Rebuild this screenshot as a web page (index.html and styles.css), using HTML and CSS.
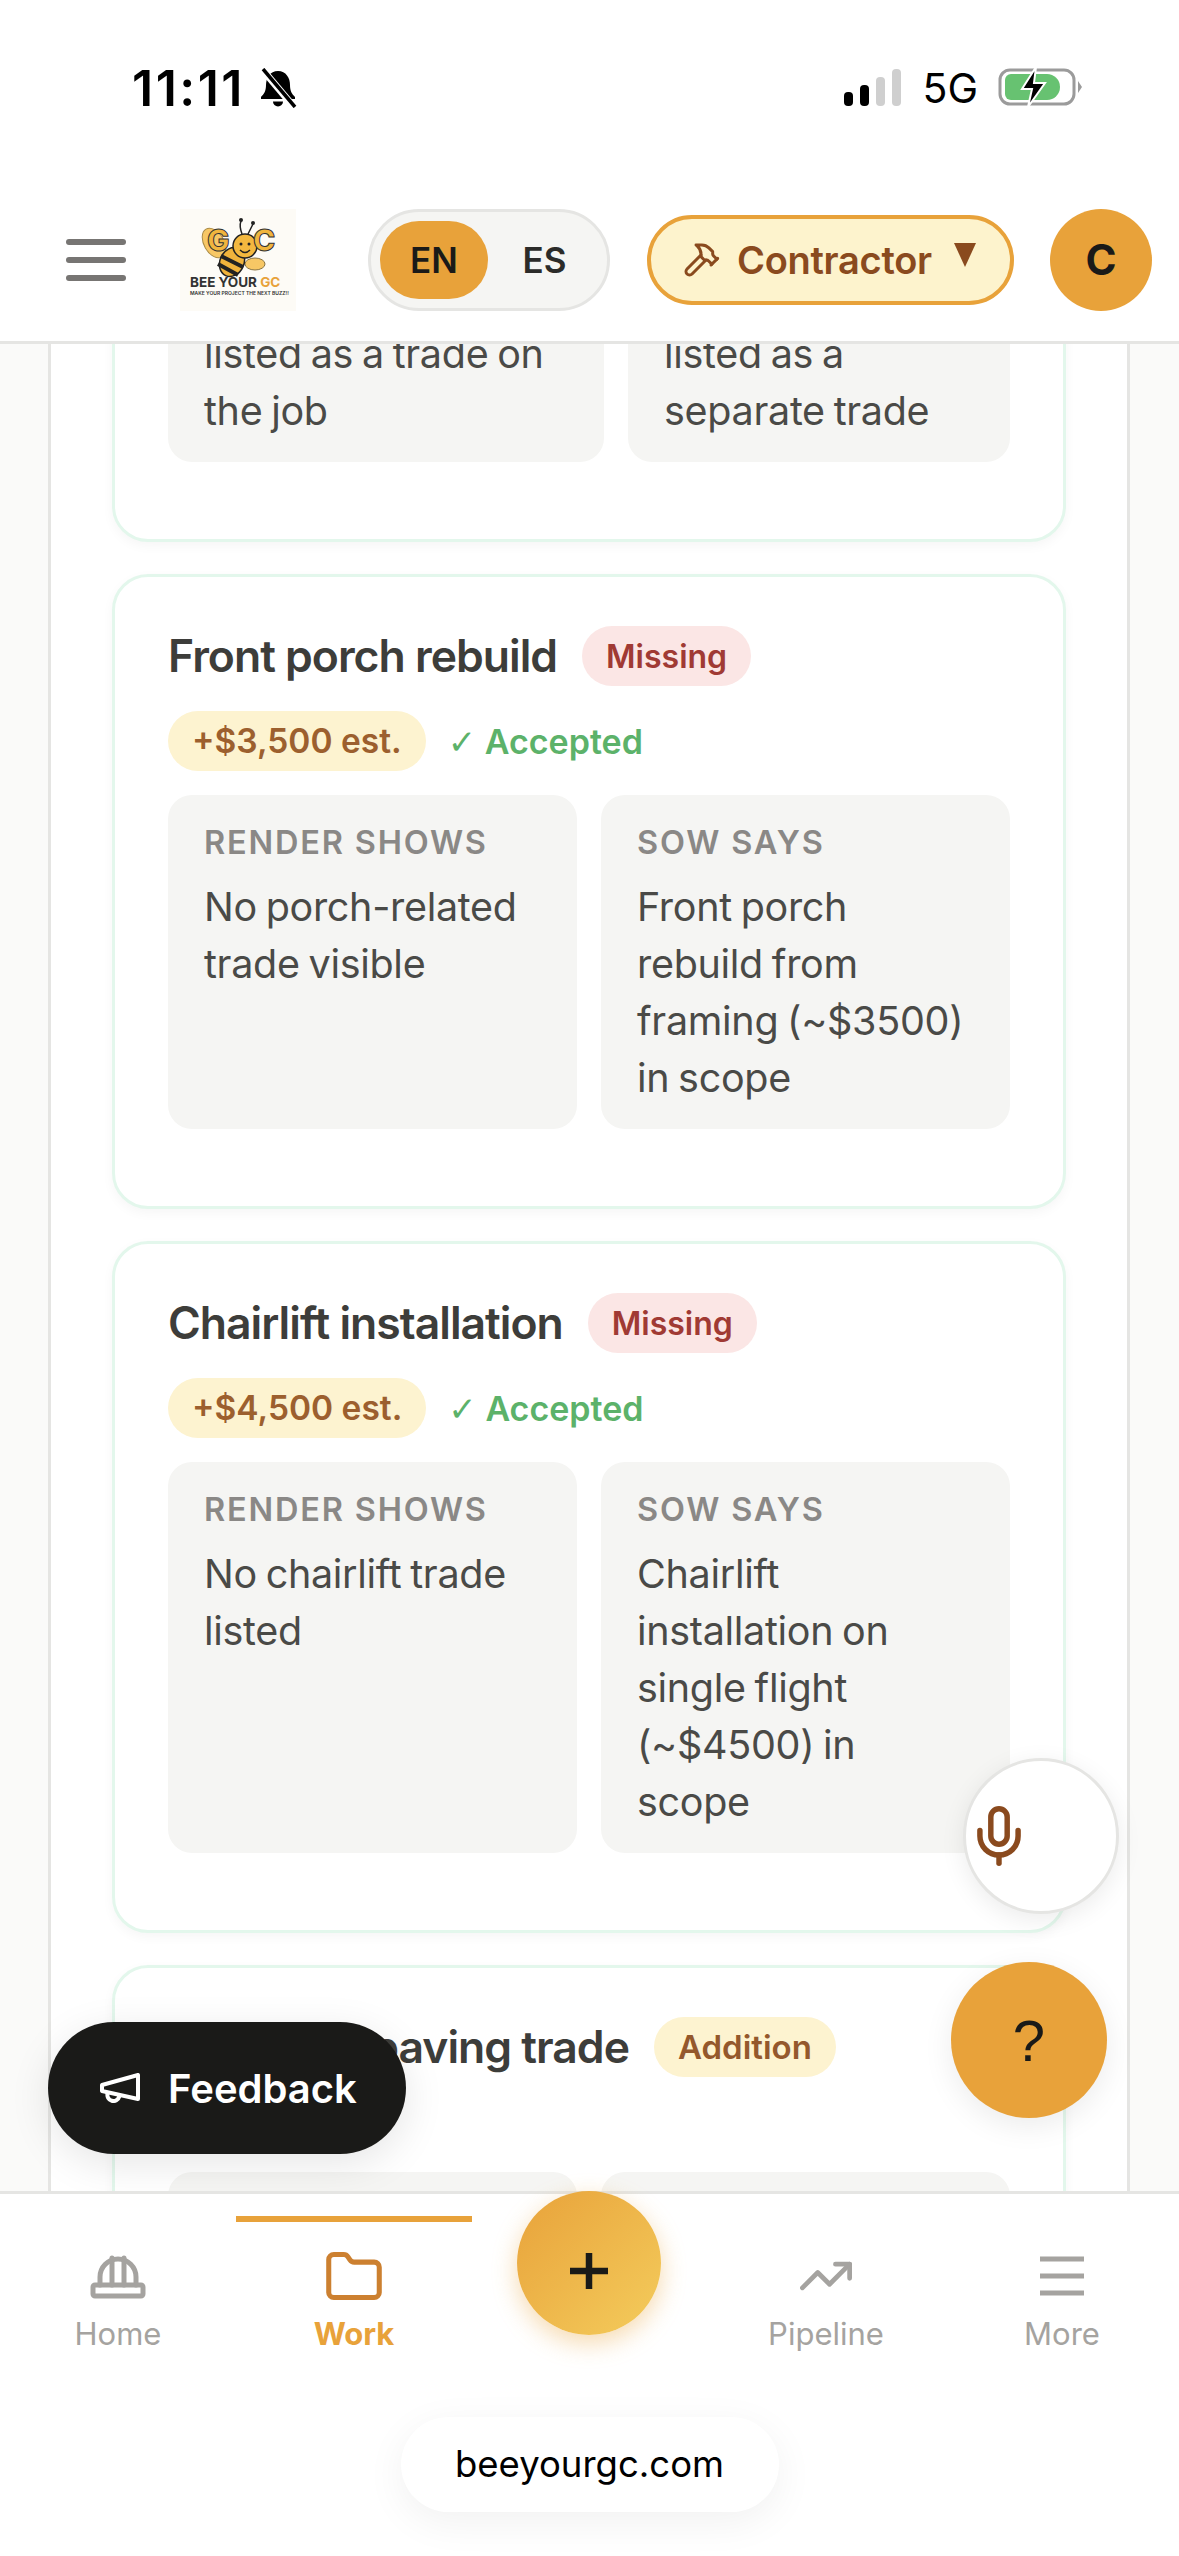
FILE: index.html
```html
<!DOCTYPE html>
<html lang="en">
<head>
  <meta charset="UTF-8" />
  <meta name="viewport" content="width=device-width, initial-scale=1.0"/>
  <title>Bee Your GC</title>
  <link rel="stylesheet" href="styles.css">
</head>
<body>
<div class="page">

  <div class="status">
    <span class="clock">11:11</span>
    <svg class="bell" viewBox="0 0 40 40" width="40" height="40">
      <path d="M20 3c-8 0-12 7-12 14 0 6-2 9-5 12v2h34v-2c-3-3-5-6-5-12 0-7-4-14-12-14z" fill="#000"/>
      <path d="M15 33.500a5 5 0 0 0 10 0z" fill="#000"/>
      <path d="M4 1l32 38" stroke="#fff" stroke-width="7"/>
      <path d="M5 1l32 38" stroke="#000" stroke-width="3.500"/>
    </svg>
    <div class="status-right">
      <div class="signal"><i class="s1"></i><i class="s2"></i><i class="s3"></i><i class="s4"></i></div>
      <span class="net">5G</span>
      <svg class="battery" viewBox="0 0 84 42" width="84" height="42">
        <rect x="2" y="4" width="74" height="34" rx="10" fill="none" stroke="#9b9b9b" stroke-width="3"/>
        <path d="M80 15l4 6-4 6z" fill="#9b9b9b"/>
        <path d="M13 8h36a13 13 0 0 1 0 26H13a6 6 0 0 1-6-6V14a6 6 0 0 1 6-6z" fill="#67c271"/>
        <path d="M38 1L24 23h10l-4 18 17-24H36z" fill="#000" stroke="#fff" stroke-width="2"/>
      </svg>
    </div>
  </div>

  <header class="topbar">
    <div class="burger"><i></i><i></i><i></i></div>
    <svg class="logo" viewBox="0 0 116 102" width="116" height="102">
      <rect width="116" height="102" fill="#fdfbf6"/>
      <ellipse cx="34" cy="34" rx="10" ry="16" fill="#f7c765" stroke="#a98a45" transform="rotate(-30 34 34)"/>
      <ellipse cx="75" cy="55" rx="10" ry="6" fill="#f7c765" stroke="#8a7440"/>
      <ellipse cx="52" cy="53" rx="12" ry="15" fill="#f0b33c" stroke="#222" stroke-width="1.500" transform="rotate(25 52 53)"/>
      <path d="M41 47l22 11M38 55l20 11" stroke="#222" stroke-width="4"/>
      <circle cx="65" cy="37" r="12" fill="#f3b83f" stroke="#222" stroke-width="1.500"/>
      <circle cx="61" cy="35" r="1.500" fill="#222"/>
      <circle cx="69" cy="35" r="1.500" fill="#222"/>
      <path d="M60 41q5 5 10 0" stroke="#222" fill="none" stroke-width="1.500"/>
      <path d="M62 25q-3-8-1-13M68 25q3-6 5-10" stroke="#222" fill="none" stroke-width="1.500"/>
      <circle cx="61" cy="11" r="2" fill="#222"/>
      <circle cx="73" cy="14" r="2" fill="#222"/>
      <text class="logo-letter" x="27" y="42">G</text>
      <text class="logo-letter" x="73" y="42">C</text>
      <text class="logo-name" x="10" y="78">BEE YOUR <tspan fill="#e8a23a">GC</tspan></text>
      <text class="logo-tag" x="10" y="86">MAKE YOUR PROJECT THE NEXT BUZZ!!</text>
    </svg>
    <div class="lang">
      <span class="lang-on">EN</span>
      <span class="lang-off">ES</span>
    </div>
    <div class="role">
      <svg viewBox="0 0 24 24" width="40" height="40" fill="none" stroke="currentColor" stroke-width="1.800" stroke-linecap="round" stroke-linejoin="round">
        <path d="m15 12-8.373 8.373a1 1 0 1 1-3-3L12 9"/>
        <path d="m18 15 4-4"/>
        <path d="m21.500 11.500-1.914-1.914A2 2 0 0 1 19 8.172V7l-2.260-2.260a6 6 0 0 0-4.202-1.756L9 2.960l.92.820A6.180 6.180 0 0 1 12 8.400V10l2 2h1.172a2 2 0 0 1 1.414.586L18.500 14.500"/>
      </svg>
      <span class="role-name">Contractor</span>
      <span class="role-caret"></span>
    </div>
    <div class="avatar">C</div>
  </header>

  <main class="content">
    <div class="panel">

      <section class="card card-cut">
        <div class="compare compare-wide">
          <div class="box"><p class="box-text">listed as a trade on the job</p></div>
          <div class="box"><p class="box-text">listed as a separate trade</p></div>
        </div>
      </section>

      <section class="card">
        <div class="card-head">
          <h3>Front porch rebuild</h3>
          <span class="pill pill-missing">Missing</span>
        </div>
        <div class="card-meta">
          <span class="pill pill-est">+$3,500 est.</span>
          <span class="accepted"><span class="tick">✓</span> Accepted</span>
        </div>
        <div class="compare">
          <div class="box">
            <div class="box-label">RENDER SHOWS</div>
            <p class="box-text">No porch-related trade visible</p>
          </div>
          <div class="box">
            <div class="box-label">SOW SAYS</div>
            <p class="box-text">Front porch rebuild from framing (~$3500) in scope</p>
          </div>
        </div>
      </section>

      <section class="card">
        <div class="card-head">
          <h3>Chairlift installation</h3>
          <span class="pill pill-missing">Missing</span>
        </div>
        <div class="card-meta">
          <span class="pill pill-est">+$4,500 est.</span>
          <span class="accepted"><span class="tick">✓</span> Accepted</span>
        </div>
        <div class="compare">
          <div class="box">
            <div class="box-label">RENDER SHOWS</div>
            <p class="box-text">No chairlift trade listed</p>
          </div>
          <div class="box">
            <div class="box-label">SOW SAYS</div>
            <p class="box-text">Chairlift installation on single flight (~$4500) in scope</p>
          </div>
        </div>
      </section>

      <section class="card">
        <div class="card-head">
          <h3>Driveway paving trade</h3>
          <span class="pill pill-add">Addition</span>
        </div>
        <div class="card-meta card-meta-short"></div>
        <div class="compare">
          <div class="box"></div>
          <div class="box"></div>
        </div>
      </section>

    </div>

    <button class="mic">
      <svg viewBox="4 1 16 22" width="44" height="60" fill="none" stroke="currentColor" stroke-width="2" stroke-linecap="round">
        <rect x="9" y="2" width="6" height="13" rx="3"/>
        <path d="M19 10v2a7 7 0 0 1-14 0v-2"/>
        <path d="M12 19v3"/>
      </svg>
    </button>
    <button class="help">?</button>
    <button class="feedback">
      <svg viewBox="2 5 20 15" width="40" height="30" fill="none" stroke="currentColor" stroke-width="2" stroke-linecap="round" stroke-linejoin="round">
        <path d="m3 11 18-5v12L3 14v-3z"/>
        <path d="M11.600 16.800a3 3 0 1 1-5.800-1.600"/>
      </svg>
      Feedback
    </button>
  </main>

  <footer class="bottom">
    <nav class="tabs">
      <a class="tab">
        <span class="tab-icon">
          <svg viewBox="0 0 56 46" width="56" height="46" fill="none" stroke="currentColor" stroke-width="5" stroke-linejoin="round" stroke-linecap="round">
            <rect x="3" y="32" width="50" height="11" rx="2"/>
            <path d="M10 32V24A18 18 0 0 1 46 24V32"/>
            <path d="M22 32V5M34 32V5"/>
          </svg>
        </span>
        Home
      </a>
      <a class="tab tab-active">
        <span class="tab-icon">
          <svg viewBox="1 2 22 19" width="56" height="48" fill="none" stroke="#cc8030" stroke-width="2" stroke-linejoin="round">
            <path d="M20 20a2 2 0 0 0 2-2V8a2 2 0 0 0-2-2h-7.900a2 2 0 0 1-1.690-.9L9.600 3.900A2 2 0 0 0 7.930 3H4a2 2 0 0 0-2 2v13a2 2 0 0 0 2 2Z"/>
          </svg>
        </span>
        Work
      </a>
      <div class="tab-add">
        <button class="add">
          <svg viewBox="0 0 38 36" width="38" height="36"><path d="M19 0v36M0 18h38" stroke="#1a1a18" stroke-width="6.500"/></svg>
        </button>
      </div>
      <a class="tab">
        <span class="tab-icon">
          <svg viewBox="1 6 22 12" width="52" height="32" fill="none" stroke="currentColor" stroke-width="2" stroke-linecap="round" stroke-linejoin="round">
            <polyline points="22 7 13.500 15.500 8.500 10.500 2 17"/>
            <polyline points="16 7 22 7 22 13"/>
          </svg>
        </span>
        Pipeline
      </a>
      <a class="tab">
        <span class="tab-icon">
          <svg viewBox="0 0 46 40" width="46" height="40" stroke="currentColor" stroke-width="5"><path d="M1 3h44M1 20h44M1 37h44"/></svg>
        </span>
        More
      </a>
    </nav>
    <div class="url">beeyourgc.com</div>
  </footer>

</div>
</body>
</html>
```

FILE: styles.css
```css
:root {
  --orange: #e8a23a;
  --brown: #8a4a1e;
  --cream: #fdf3cd;
  --line: #e5e5e3;
  --mint: #e3f7ec;
  --dark: #1a1a18;
  --title: #3d3d3a;
  --body: #4a4a47;
  --grey: #a5a3a0;
}

* {
  box-sizing: border-box;
}

body {
  margin: 0;
  font-family: Inter, 'Noto Sans', sans-serif;
  background: #fff;
}

button {
  font-family: inherit;
  border: none;
  padding: 0;
}

.page {
  position: relative;
  display: flex;
  flex-direction: column;
  width: 1179px;
  height: 2556px;
  overflow: hidden;
  background: #fff;
}

/* status bar */
.status {
  display: flex;
  align-items: flex-start;
  height: 178px;
  padding: 66px 0 0 132px;
  flex-shrink: 0;
}

.clock {
  font-size: 50px;
  font-weight: 600;
  line-height: 44px;
  letter-spacing: 2.500px;
  color: #000;
}

.bell {
  margin: 2px 0 0 13px;
}

.status-right {
  display: flex;
  align-items: flex-end;
  margin-left: auto;
  margin-right: 97px;
  height: 42px;
}

.signal {
  display: flex;
  align-items: flex-end;
  gap: 7px;
  margin-bottom: 2px;
}

.signal i {
  display: block;
  width: 9px;
  border-radius: 4px;
  background: #000;
}

.s1 { height: 14px; }
.s2 { height: 21px; }
.s3 { height: 29px; background: #cfcfcf !important; }
.s4 { height: 37px; background: #cfcfcf !important; }

.net {
  margin: 0 20px 0 21px;
  font-size: 41px;
  line-height: 40px;
  color: #000;
}

/* header */
.topbar {
  display: flex;
  align-items: center;
  height: 166px;
  padding-left: 66px;
  border-bottom: 3px solid var(--line);
  flex-shrink: 0;
}

.burger {
  display: flex;
  flex-direction: column;
  gap: 12px;
  width: 60px;
}

.burger i {
  display: block;
  height: 6px;
  border-radius: 3px;
  background: #777573;
}

.logo {
  margin-left: 54px;
}

.logo-letter {
  font-size: 30px;
  font-weight: 800;
  fill: #f0b53e;
  stroke: #333;
  stroke-width: 1;
}

.logo-name {
  font-size: 13.500px;
  font-weight: 700;
  fill: #333;
}

.logo-tag {
  font-size: 5px;
  font-weight: 600;
  fill: #333;
}

.lang {
  display: flex;
  align-items: center;
  width: 242px;
  height: 102px;
  margin-left: 72px;
  padding: 0 9px;
  border: 3px solid var(--line);
  border-radius: 51px;
  background: #f5f5f3;
  font-size: 35px;
  font-weight: 600;
  color: #2b2b29;
}

.lang-on {
  display: flex;
  align-items: center;
  justify-content: center;
  width: 108px;
  height: 78px;
  border-radius: 39px;
  background: var(--orange);
  color: var(--dark);
}

.lang-off {
  flex: 1;
  padding-left: 3px;
  text-align: center;
}

.role {
  display: flex;
  align-items: center;
  width: 367px;
  height: 90px;
  margin-left: 37px;
  padding-left: 30px;
  border: 4px solid var(--orange);
  border-radius: 45px;
  background: var(--cream);
  color: var(--brown);
}

.role-name {
  margin-left: 16px;
  font-size: 38px;
  font-weight: 600;
  letter-spacing: -0.300px;
}

.role-caret {
  width: 0;
  height: 0;
  margin: -10px 0 0 22px;
  border-left: 11px solid transparent;
  border-right: 11px solid transparent;
  border-top: 24px solid var(--brown);
}

.avatar {
  display: flex;
  align-items: center;
  justify-content: center;
  width: 102px;
  height: 102px;
  margin-left: 36px;
  border-radius: 50%;
  background: var(--orange);
  font-size: 42px;
  font-weight: 700;
  color: var(--dark);
}

/* scrolled content */
.content {
  flex: 1;
  overflow: hidden;
  padding: 0 49px 0 48px;
  background: #fafaf9;
}

.panel {
  display: flex;
  flex-direction: column;
  gap: 32px;
  margin-top: -110px;
  padding: 0 61px;
  background: #fff;
  border-left: 3px solid var(--line);
  border-right: 3px solid var(--line);
}

.card {
  padding: 49px 53px 77px;
  background: #fff;
  border: 3px solid var(--mint);
  border-radius: 36px;
  box-shadow: 0 4px 12px rgba(0, 0, 0, 0.04);
  flex-shrink: 0;
}

.card-head {
  display: flex;
  align-items: center;
  gap: 25px;
}

.card-head h3 {
  margin: 0;
  font-size: 44.500px;
  font-weight: 600;
  letter-spacing: -1px;
  color: var(--title);
  white-space: nowrap;
}

.card-meta {
  display: flex;
  align-items: center;
  gap: 22px;
  margin-top: 25px;
}

.card-meta-short {
  height: 46px;
}

.pill {
  display: flex;
  align-items: center;
  height: 60px;
  padding: 0 24px;
  border-radius: 30px;
  font-size: 33px;
  font-weight: 600;
  white-space: nowrap;
}

.pill-missing {
  background: #fbe6e5;
  color: #a03a34;
  font-size: 32px;
}

.pill-add {
  background: #fdf3d0;
  color: #94582c;
}

.pill-est {
  background: #fdf3d0;
  color: #9c5f2e;
  font-size: 33.500px;
}

.accepted {
  font-size: 34px;
  font-weight: 600;
  color: #5cb26a;
}

.tick {
  font-family: 'DejaVu Sans', sans-serif;
  font-weight: 400;
}

.compare {
  display: grid;
  grid-template-columns: 1fr 1fr;
  gap: 24px;
  margin-top: 24px;
}

.compare-wide {
  grid-template-columns: 436px 1fr;
  margin-top: 0;
}

.box {
  min-height: 110px;
  padding: 26px 36px 22px;
  background: #f5f5f3;
  border-radius: 24px;
}

.box-label {
  font-size: 32.500px;
  font-weight: 600;
  line-height: 44px;
  letter-spacing: 1.800px;
  color: #8a8886;
}

.box-text {
  margin: 14px 0 0;
  font-size: 39.500px;
  line-height: 57px;
  letter-spacing: -0.300px;
  word-spacing: -2px;
  color: var(--body);
}

/* floating buttons */
.mic {
  position: absolute;
  left: 963px;
  top: 1758px;
  display: flex;
  align-items: center;
  width: 156px;
  height: 156px;
  padding-left: 11px;
  background: #fff;
  border: 3px solid var(--line);
  border-radius: 50%;
  color: var(--brown);
  box-shadow: 0 6px 24px rgba(0, 0, 0, 0.08);
}

.help {
  position: absolute;
  left: 951px;
  top: 1962px;
  width: 156px;
  height: 156px;
  background: var(--orange);
  border-radius: 50%;
  font-family: 'Liberation Sans', sans-serif;
  font-size: 58px;
  color: var(--dark);
  box-shadow: 0 8px 30px rgba(0, 0, 0, 0.08);
}

.feedback {
  position: absolute;
  left: 48px;
  top: 2022px;
  display: flex;
  align-items: center;
  gap: 28px;
  width: 358px;
  height: 132px;
  padding-left: 52px;
  background: var(--dark);
  border-radius: 66px;
  font-size: 40px;
  font-weight: 600;
  color: #fff;
  box-shadow: 0 10px 40px rgba(0, 0, 0, 0.1);
}

/* bottom nav */
.bottom {
  position: relative;
  height: 365px;
  background: #fff;
  border-top: 3px solid var(--line);
  flex-shrink: 0;
}

.tabs {
  display: grid;
  grid-template-columns: repeat(5, 236px);
  padding-top: 22px;
}

.tab {
  display: flex;
  flex-direction: column;
  align-items: center;
  padding-top: 30px;
  border-top: 6px solid transparent;
  font-size: 31px;
  line-height: 40px;
  color: var(--grey);
}

.tab-active {
  border-top-color: var(--orange);
  color: var(--orange);
  font-weight: 700;
}

.tab-icon {
  display: flex;
  align-items: center;
  justify-content: center;
  height: 48px;
  margin-bottom: 14px;
}

.tab-add {
  display: flex;
  justify-content: center;
}

.add {
  display: flex;
  align-items: center;
  justify-content: center;
  width: 144px;
  height: 144px;
  margin: -25px 2px 0 0;
  padding-top: 16px;
  border-radius: 50%;
  background: linear-gradient(135deg, #e8a23a, #f4cc5c);
  box-shadow: 0 8px 24px rgba(232, 162, 58, 0.4);
}

.url {
  width: 378px;
  height: 95px;
  margin: 63px auto 0;
  border-radius: 48px;
  background: #fff;
  box-shadow: 0 10px 40px rgba(0, 0, 0, 0.06);
  font-size: 36.500px;
  line-height: 95px;
  text-align: center;
  color: #000;
}
```
